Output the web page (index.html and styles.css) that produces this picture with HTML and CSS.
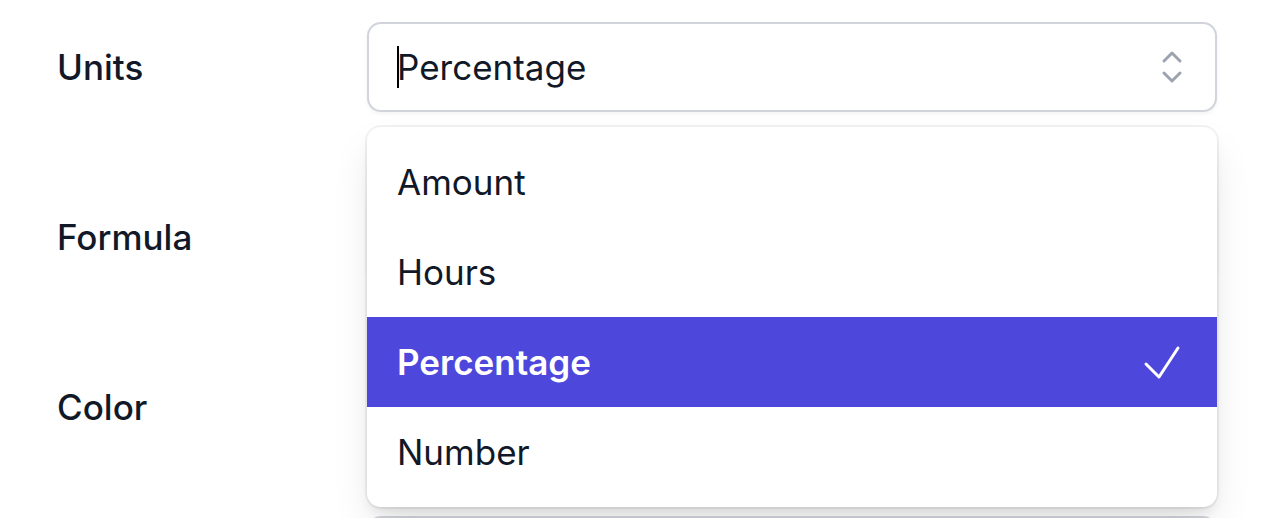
FILE: index.html
```html
<!DOCTYPE html>
<html lang="en">
<head>
<meta charset="utf-8">
<title>Edit metric</title>
<link rel="stylesheet" href="styles.css">
</head>
<body>

<form class="settings">
    <div class="row">
        <label class="label" for="units">Units</label>
        <div class="combobox">
            <input class="field" type="text" id="units" value="Percentage" role="combobox" aria-expanded="true" aria-controls="units-options" autocomplete="off">
            <span class="caret"></span>
            <button class="toggle" type="button" aria-label="Show units">
                <svg viewBox="0 0 40 40" fill="none" stroke="currentColor" stroke-width="3" stroke-linecap="round" stroke-linejoin="round">
                    <path d="M12 14L20 6L28 14M12 26L20 34L28 26"/>
                </svg>
            </button>
            <ul class="options" id="units-options" role="listbox" aria-label="Units">
                <li class="option" role="option">Amount</li>
                <li class="option" role="option">Hours</li>
                <li class="option active" role="option" aria-selected="true">
                    Percentage
                    <svg class="check" viewBox="0 0 40 40" fill="none" stroke="currentColor" stroke-width="3" stroke-linecap="round" stroke-linejoin="round">
                        <path d="M4 22L17 35L36 6"/>
                    </svg>
                </li>
                <li class="option" role="option">Number</li>
            </ul>
        </div>
    </div>
    <div class="row">
        <label class="label" for="formula">Formula</label>
        <input class="field" type="text" id="formula">
    </div>
    <div class="row">
        <label class="label" for="color">Color</label>
        <input class="color" type="color" id="color" value="#4d47dc">
    </div>
    <div class="row">
        <span></span>
        <input class="field" type="text" aria-label="Description">
    </div>
</form>

</body>
</html>
```
FILE: styles.css
```css
* {
    box-sizing: border-box;
}
body {
    background-color: #fff;
    font-family: Inter, "Liberation Sans", sans-serif;
    font-size: 35px;
    line-height: 54px;
    color: #111827;
    margin: 0;
}
.settings {
    display: flex;
    flex-direction: column;
    gap: 80px;
    height: 100vh;
    padding: 22px 59px 0 57px;
    overflow: hidden;
}
.row {
    display: grid;
    grid-template-columns: 310px 1fr;
    align-items: start;
}
.label {
    padding-top: 18px;
    font-weight: 500;
}
.combobox {
    position: relative;
}
.field {
    display: block;
    width: 100%;
    height: 90px;
    padding: 0 88px 0 28px;
    border: 2px solid #d1d5db;
    border-radius: 14px;
    background-color: #fff;
    box-shadow: 0 2px 4px rgba(0, 0, 0, 0.05);
    font: inherit;
    color: inherit;
    outline: none;
}
.caret {
    position: absolute;
    top: 24px;
    left: 30px;
    width: 2px;
    height: 42px;
    background-color: #000;
}
.toggle {
    position: absolute;
    top: 0;
    right: 0;
    display: flex;
    align-items: center;
    height: 90px;
    padding: 0 25px;
    border: none;
    background: none;
    color: #9ca3af;
    cursor: pointer;
}
.toggle svg, .check {
    width: 40px;
    height: 40px;
}

.options {
    position: absolute;
    z-index: 10;
    top: 105px;
    left: 0;
    width: 100%;
    margin: 0;
    padding: 10px 0;
    border-radius: 14px;
    background-color: #fff;
    box-shadow: 0 0 0 2px rgba(0, 0, 0, 0.05), 0 20px 40px -4px rgba(0, 0, 0, 0.1), 0 8px 12px -4px rgba(0, 0, 0, 0.1);
    list-style: none;
}
.option {
    display: flex;
    justify-content: space-between;
    align-items: center;
    height: 90px;
    padding: 0 35px 0 30px;
    cursor: default;
}
.active {
    background-color: #4d47dc;
    color: #fff;
    font-weight: 600;
}

.color {
    width: 148px;
    height: 74px;
    padding: 4px;
    border: 2px solid #d1d5db;
    border-radius: 14px;
    background-color: #fff;
}
```
